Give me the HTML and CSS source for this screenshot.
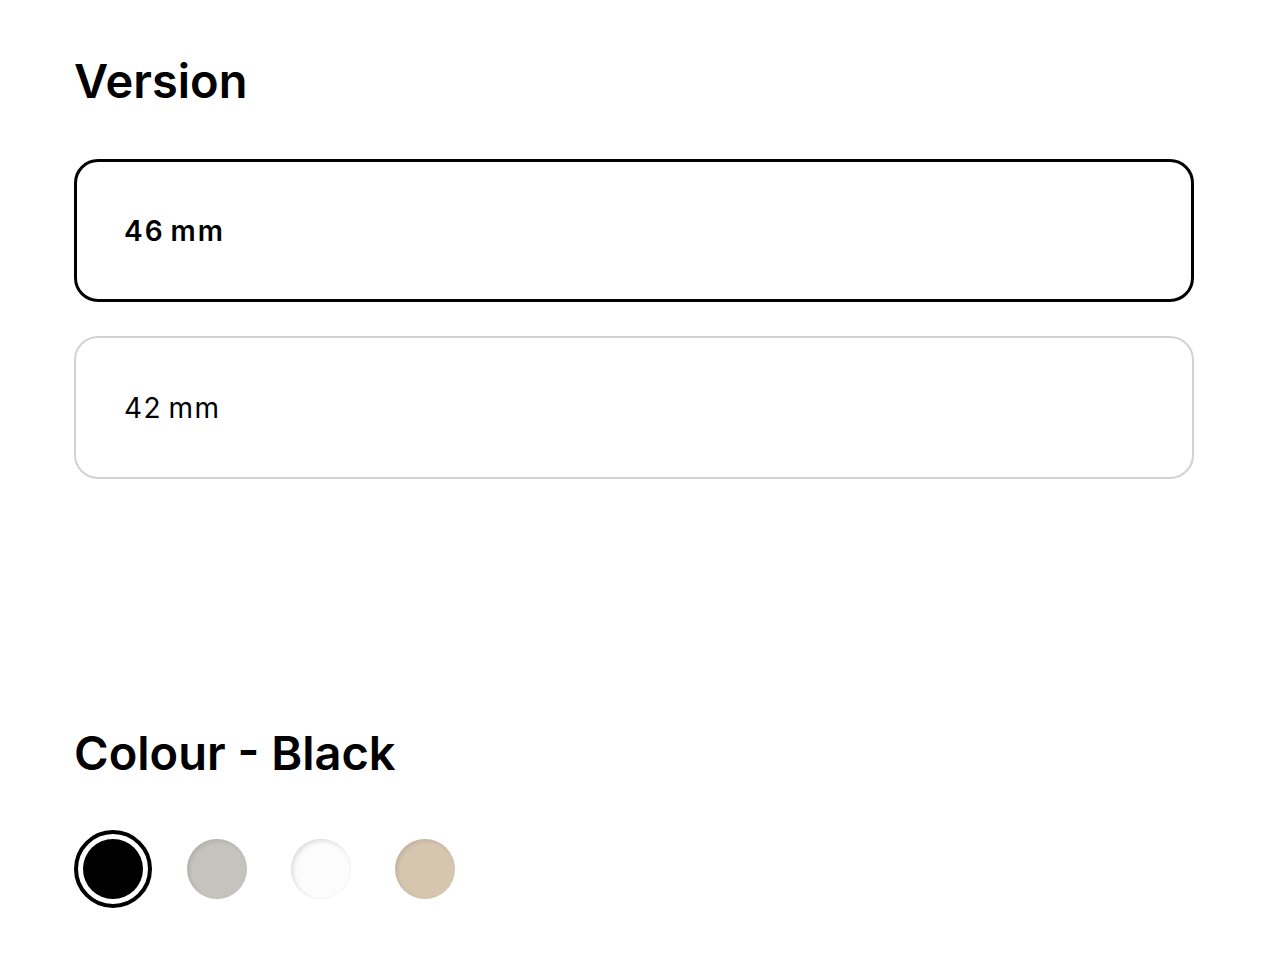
FILE: index.html
```html
<!DOCTYPE html>
<html lang="en">
<head>
<meta charset="utf-8">
<title>Version</title>
<link rel="stylesheet" href="styles.css">
</head>
<body>
<main class="page">
  <section class="group">
    <h2 class="title">Version</h2>
    <div class="options">
      <button class="option is-selected">46 mm</button>
      <button class="option">42 mm</button>
    </div>
  </section>
  <section class="group colour">
    <h2 class="title">Colour - Black</h2>
    <div class="swatches">
      <button class="swatch is-selected" aria-label="Black"><span class="dot dot-black"></span></button>
      <button class="swatch" aria-label="Grey"><span class="dot dot-grey"></span></button>
      <button class="swatch" aria-label="White"><span class="dot dot-white"></span></button>
      <button class="swatch" aria-label="Sand"><span class="dot dot-sand"></span></button>
    </div>
  </section>
</main>
</body>
</html>
```
FILE: styles.css
```css
* { box-sizing: border-box; }
html, body { margin: 0; padding: 0; background: #fff; }
body {
  font-family: Inter, "Liberation Sans", sans-serif;
  color: #000;
}
.page {
  padding: 52px 72px 0 74px;
}
.title {
  margin: 0;
  font-size: 47px;
  line-height: 57px;
  font-weight: 600;
  letter-spacing: 0;
}
.options {
  margin-top: 50px;
  display: flex;
  flex-direction: column;
  gap: 34px;
}
.option {
  display: flex;
  align-items: center;
  height: 143px;
  width: 100%;
  padding: 0 0 0 48px;
  border: 2px solid #d2d2d2;
  border-radius: 24px;
  background: #fff;
  font-family: inherit;
  font-size: 28px;
  font-weight: 400;
  letter-spacing: 1.5px;
  word-spacing: -3px;
  color: #000;
  text-align: left;
  cursor: pointer;
}
.option.is-selected {
  border: 3px solid #000;
  padding-left: 47px;
  font-weight: 600;
  letter-spacing: 2px;
}
.colour {
  margin-top: 245px;
}
.swatches {
  margin-top: 49px;
  display: flex;
  gap: 26px;
}
.swatch {
  width: 78px;
  height: 78px;
  padding: 5px;
  border: 4px solid transparent;
  border-radius: 50%;
  background: #fff;
  cursor: pointer;
}
.swatch.is-selected {
  border-color: #000;
}
.dot {
  display: block;
  width: 60px;
  height: 60px;
  border-radius: 50%;
  box-shadow: inset 2px 2px 4px rgba(0,0,0,0.10);
}
.dot-black { background: #000; }
.dot-grey { background: #c5c3bd; }
.dot-white { background: #fdfcfd; box-shadow: inset 2px 2px 4px rgba(0,0,0,0.12), inset 0 0 1px rgba(0,0,0,0.1); }
.dot-sand { background: #d6c6b0; }
```
